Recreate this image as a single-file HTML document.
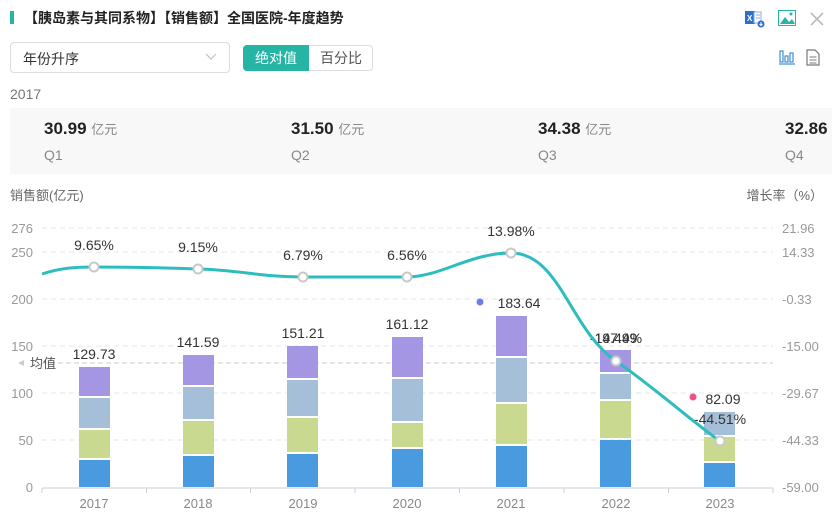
<!DOCTYPE html>
<html><head><meta charset="utf-8"><style>
body{margin:0;width:840px;height:520px;overflow:hidden;background:#fff;font-family:"Liberation Sans","Noto Sans CJK SC",sans-serif;position:relative}
.a{position:absolute;white-space:nowrap}
</style></head><body>
<div class="a" style="left:10px;top:11px;width:4px;height:13px;background:#26b5a5"></div>
<div class="a" style="left:24px;top:8px;font-size:14px;font-weight:bold;color:#222">【胰岛素与其同系物】【销售额】全国医院-年度趋势</div>
<svg class="a" style="left:744px;top:9px" width="22" height="20" viewBox="0 0 22 20"><rect x="1" y="2" width="10" height="13" fill="#2b6fcf"/><rect x="10" y="3" width="7" height="11" fill="#fff" stroke="#8aaee0"/><line x1="12" y1="6" x2="16" y2="6" stroke="#8aaee0"/><line x1="12" y1="9" x2="16" y2="9" stroke="#8aaee0"/><text x="3" y="12" font-size="8" fill="#fff" font-family="Liberation Sans" font-weight="bold">X</text><circle cx="17" cy="15" r="3.5" fill="#2b6fcf"/><path d="M17 13v3M15.5 15l1.5 1.5 1.5-1.5" stroke="#fff" fill="none"/></svg>
<svg class="a" style="left:778px;top:10px" width="18" height="16" viewBox="0 0 18 16"><rect x="0.5" y="0.5" width="17" height="15" fill="#fff" stroke="#26b5a5"/><path d="M2 14L7 7l4 5 3-3 3 5z" fill="#26b5a5"/><circle cx="13" cy="4" r="1.5" fill="#26b5a5"/></svg>
<svg class="a" style="left:810px;top:12px" width="14" height="14"><path d="M1 1L13 13M13 1L1 13" stroke="#bbb" stroke-width="1.6"/></svg>
<svg class="a" style="left:779px;top:49px" width="16" height="16"><g stroke="#3d8fd6" fill="none" stroke-width="1.2"><rect x="1" y="2" width="3" height="11"/><rect x="6" y="7" width="3" height="6"/><rect x="11" y="4" width="3" height="9"/><line x1="0" y1="15" x2="16" y2="15"/></g></svg>
<svg class="a" style="left:806px;top:49px" width="14" height="17"><path d="M1 1h8l4 4v11H1z" fill="#fff" stroke="#777" stroke-width="1.2"/><g stroke="#777"><line x1="3.5" y1="8" x2="10.5" y2="8"/><line x1="3.5" y1="11" x2="10.5" y2="11"/><line x1="3.5" y1="14" x2="10.5" y2="14"/></g></svg>
<div class="a" style="left:10px;top:42px;width:220px;height:31px;border:1px solid #ddd;border-radius:4px;box-sizing:border-box"></div>
<div class="a" style="left:23px;top:49px;font-size:14px;color:#333">年份升序</div>
<svg class="a" style="left:205px;top:53px" width="12" height="8"><path d="M1 1l5 5 5-5" stroke="#bbb" fill="none"/></svg>
<div class="a" style="left:243px;top:45px;width:130px;height:26px;border:1px solid #ddd;border-radius:4px;box-sizing:border-box"></div>
<div class="a" style="left:243px;top:45px;width:66px;height:26px;background:#26b5a5;border-radius:4px 0 0 4px;color:#fff;font-size:14px;line-height:26px;text-align:center">绝对值</div>
<div class="a" style="left:309px;top:45px;width:64px;height:26px;color:#555;font-size:14px;line-height:26px;text-align:center">百分比</div>
<div class="a" style="left:10px;top:86px;font-size:14px;color:#777">2017</div>
<div class="a" style="left:10px;top:108px;width:822px;height:66px;background:#f8f8f8;overflow:hidden">
<div class="a" style="left:34px;top:11px;font-size:17px;font-weight:bold;color:#222">30.99 <span style="font-size:13px;font-weight:normal;color:#888">亿元</span></div>
<div class="a" style="left:281px;top:11px;font-size:17px;font-weight:bold;color:#222">31.50 <span style="font-size:13px;font-weight:normal;color:#888">亿元</span></div>
<div class="a" style="left:528px;top:11px;font-size:17px;font-weight:bold;color:#222">34.38 <span style="font-size:13px;font-weight:normal;color:#888">亿元</span></div>
<div class="a" style="left:775px;top:11px;font-size:17px;font-weight:bold;color:#222">32.86 <span style="font-size:13px;font-weight:normal;color:#888">亿元</span></div>
<div class="a" style="left:34px;top:39px;font-size:14px;color:#888">Q1</div>
<div class="a" style="left:281px;top:39px;font-size:14px;color:#888">Q2</div>
<div class="a" style="left:528px;top:39px;font-size:14px;color:#888">Q3</div>
<div class="a" style="left:775px;top:39px;font-size:14px;color:#888">Q4</div>
</div>
<svg class="a" style="left:0;top:180px" width="840" height="340" viewBox="0 180 840 340" font-family="Liberation Sans,Noto Sans CJK SC,sans-serif">
<text x="10" y="200" font-size="13" fill="#666">销售额(亿元)</text>
<text x="823" y="200" font-size="13" fill="#666" text-anchor="end">增长率（%）</text>
<g stroke="#e4e4e4" stroke-dasharray="5,4"><line x1="42" y1="228" x2="773" y2="228"/><line x1="42" y1="252" x2="773" y2="252"/><line x1="42" y1="299" x2="773" y2="299"/><line x1="42" y1="346" x2="773" y2="346"/><line x1="42" y1="393" x2="773" y2="393"/><line x1="42" y1="440" x2="773" y2="440"/></g>
<line x1="42" y1="363" x2="773" y2="363" stroke="#ccc" stroke-dasharray="5,3"/>
<g font-size="13" fill="#999" text-anchor="end"><text x="33" y="233">276</text><text x="33" y="257">250</text><text x="33" y="304">200</text><text x="33" y="351">150</text><text x="33" y="398">100</text><text x="33" y="445">50</text><text x="33" y="492">0</text></g>
<g font-size="13" fill="#999"><text x="782" y="233">21.96</text><text x="782" y="257">14.33</text><text x="782" y="304">-0.33</text><text x="782" y="351">-15.00</text><text x="782" y="398">-29.67</text><text x="782" y="445">-44.33</text><text x="782" y="492">-59.00</text></g>
<path d="M18 363l6-3v6z" fill="#ccc"/><text x="30" y="368" font-size="13" fill="#555">均值</text>
<line x1="42" y1="488" x2="773" y2="488" stroke="#ccd"/>
<g stroke="#ccd"><line x1="42" y1="488" x2="42" y2="493"/><line x1="146.5" y1="488" x2="146.5" y2="493"/><line x1="250.5" y1="488" x2="250.5" y2="493"/><line x1="355" y1="488" x2="355" y2="493"/><line x1="459.5" y1="488" x2="459.5" y2="493"/><line x1="564" y1="488" x2="564" y2="493"/><line x1="668.5" y1="488" x2="668.5" y2="493"/><line x1="773" y1="488" x2="773" y2="493"/></g>
<g font-size="13" fill="#888" text-anchor="middle"><text x="94" y="508">2017</text><text x="198" y="508">2018</text><text x="303" y="508">2019</text><text x="407" y="508">2020</text><text x="511" y="508">2021</text><text x="616" y="508">2022</text><text x="720" y="508">2023</text></g>
<g>
<rect x="79" y="367" width="31" height="29" fill="#a596e4"/><rect x="79" y="398" width="31" height="30" fill="#a6bfd8"/><rect x="79" y="430" width="31" height="28" fill="#c9d98f"/><rect x="79" y="460" width="31" height="27" fill="#4a9ae0"/>
<rect x="183" y="355" width="31" height="30" fill="#a596e4"/><rect x="183" y="387" width="31" height="32" fill="#a6bfd8"/><rect x="183" y="421" width="31" height="33" fill="#c9d98f"/><rect x="183" y="456" width="31" height="31" fill="#4a9ae0"/>
<rect x="287" y="346" width="31" height="32" fill="#a596e4"/><rect x="287" y="380" width="31" height="36" fill="#a6bfd8"/><rect x="287" y="418" width="31" height="34" fill="#c9d98f"/><rect x="287" y="454" width="31" height="33" fill="#4a9ae0"/>
<rect x="392" y="337" width="31" height="40" fill="#a596e4"/><rect x="392" y="379" width="31" height="42" fill="#a6bfd8"/><rect x="392" y="423" width="31" height="24" fill="#c9d98f"/><rect x="392" y="449" width="31" height="38" fill="#4a9ae0"/>
<rect x="496" y="316" width="31" height="40" fill="#a596e4"/><rect x="496" y="358" width="31" height="44" fill="#a6bfd8"/><rect x="496" y="404" width="31" height="40" fill="#c9d98f"/><rect x="496" y="446" width="31" height="41" fill="#4a9ae0"/>
<rect x="600" y="350" width="31" height="22" fill="#a596e4"/><rect x="600" y="374" width="31" height="25" fill="#a6bfd8"/><rect x="600" y="401" width="31" height="37" fill="#c9d98f"/><rect x="600" y="440" width="31" height="47" fill="#4a9ae0"/>
<rect x="704" y="412" width="31" height="23" fill="#a6bfd8"/><rect x="704" y="437" width="31" height="24" fill="#c9d98f"/><rect x="704" y="463" width="31" height="24" fill="#4a9ae0"/>
</g>
<g font-size="14" fill="#333" text-anchor="middle">
<text x="94" y="359">129.73</text><text x="198" y="347">141.59</text><text x="303" y="338">151.21</text><text x="407" y="329">161.12</text>
<text x="519" y="308">183.64</text><text x="616" y="343">147.49</text><text x="616" y="343">-19.49%</text><text x="723" y="404">82.09</text>
<text x="94" y="250">9.65%</text><text x="198" y="252">9.15%</text><text x="303" y="260">6.79%</text><text x="407" y="260">6.56%</text><text x="511" y="236">13.98%</text><text x="720" y="424">-44.51%</text>
</g>
<circle cx="480" cy="302" r="3.5" fill="#6d7fe0"/><circle cx="693" cy="397" r="3.5" fill="#ef4f8b"/>
<path d="M42 274C60 268 75 267 94 267C130 267 170 268 198 269C240 270 260 277 303 277C340 277 380 277 407 277C440 277 470 253 511 253C560 253 570 330 616 361C660 392 690 420 720 441" fill="none" stroke="#2dbdbf" stroke-width="3"/>
<g fill="#fff" stroke="#c8c8c8" stroke-width="2"><circle cx="94" cy="267" r="4.5"/><circle cx="198" cy="269" r="4.5"/><circle cx="303" cy="277" r="4.5"/><circle cx="407" cy="277" r="4.5"/><circle cx="511" cy="253" r="4.5"/><circle cx="616" cy="361" r="4.5"/><circle cx="720" cy="441" r="4.5"/></g>
</svg>
</body></html>
